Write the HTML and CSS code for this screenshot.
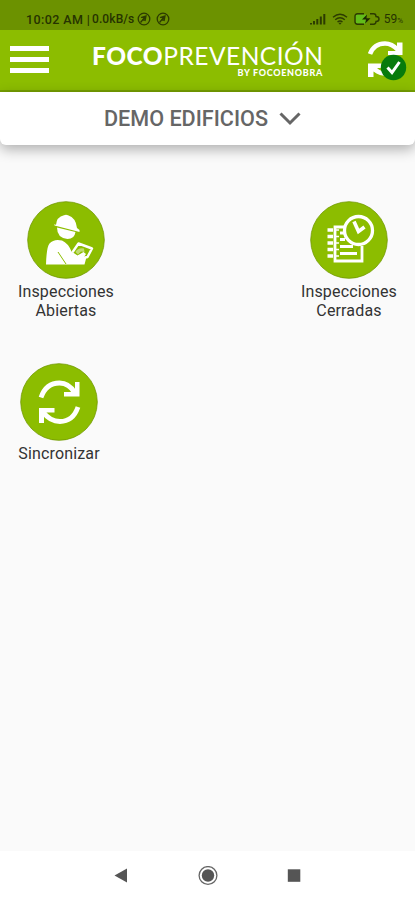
FILE: index.html
```html
<!DOCTYPE html>
<html lang="es">
<head>
  <meta charset="UTF-8">
  <meta name="viewport" content="width=device-width, initial-scale=1.0">
  <title>FocoPrevención</title>
  <link rel="stylesheet" href="styles.css">
</head>
<body>
  <!-- Status bar -->
  <div class="status-bar">
    <span class="status-time">10:02 AM | </span>
    <span class="status-speed">0.0kB/s</span>
    <svg class="status-dot" viewBox="0 0 14 14" width="14" height="14">
      <circle cx="7" cy="7" r="5.8" />
      <path d="M4 5.5l5-1.5-1 5M3.5 10.5l5-6M5 8h3" />
    </svg>
    <svg class="status-dot" viewBox="0 0 14 14" width="14" height="14">
      <circle cx="7" cy="7" r="5.8" />
      <path d="M4 5.5l5-1.5-1 5M3.5 10.5l5-6M5 8h3" />
    </svg>
    <div class="status-right">
      <svg viewBox="0 0 16 12" width="16" height="12">
        <path d="M1 11.5v-1.5M4 11.5V8M7.3 11.5V6M10.8 11.5V3.5M14.3 11.5V1" stroke="#2c3b00" stroke-width="2" />
      </svg>
      <svg class="wifi" viewBox="0 0 16 12" width="16" height="12">
        <path d="M1 4.2Q8-1.8 15 4.2M3.2 6.7Q8 2.7 12.8 6.7M5.5 9Q8 7 10.5 9" fill="none" stroke="#2c3b00" stroke-width="1.4" />
        <path d="M6.3 9.7h3.4L8 11.8z" fill="#2c3b00" />
      </svg>
      <svg class="battery" viewBox="0 0 26 12" width="26" height="12">
        <rect x="1.5" y="1.5" width="11" height="9" fill="#62bd19" />
        <path d="M10 .8H3.5Q1 .8 1 3.2v5.6q0 2.4 2.5 2.4H10M16 .8h3.5Q22 .8 22 3.5q3 0 3 2.5t-3 2.5q0 2.7-2.5 2.7H16" fill="none" stroke="#2c3b00" stroke-width="1.4" />
        <path d="M13 1.5L8 6.6h4L11 10.8l5.5-5.6h-4z" fill="#1d2800" />
      </svg>
      <span class="status-percent">59<small>%</small></span>
    </div>
  </div>

  <!-- Header -->
  <header class="header">
    <div class="menu">
      <span></span>
      <span></span>
      <span></span>
    </div>
    <div class="brand">
      <div class="brand-name"><b>FOCO</b>PREVENCIÓN</div>
      <div class="brand-by">BY FOCOENOBRA</div>
    </div>
    <svg class="sync-state" viewBox="0 0 42 44" width="42" height="44">
      <path d="M4 16Q8 5.500 19 5.500Q26 5.500 32 12" fill="none" stroke="#fff" stroke-width="4.6" />
      <path d="M36.500 4.500V17H22v-4h9V4.500z" fill="#fff" />
      <path d="M2 39V25.500h14v4.500H11Q15 34 22 34v4Q13 38 7.500 33.500V39z" fill="#fff" />
      <circle cx="27.500" cy="29.500" r="12.700" fill="#087b0c" />
      <path d="M21.500 29.500l4.500 5 7.500-10.500" fill="none" stroke="#fff" stroke-width="3" />
    </svg>
  </header>

  <!-- Building selector -->
  <div class="selector">
    <span class="selector-name">DEMO EDIFICIOS</span>
    <svg viewBox="0 0 22 14" width="22" height="14">
      <path d="M1.500 1.500l9.500 9.500L20.500 1.500" fill="none" stroke="#666" stroke-width="3" />
    </svg>
  </div>

  <!-- Options -->
  <main class="options">
    <div class="row">
      <div class="option">
        <svg viewBox="0 0 78 78" width="78" height="78">
          <circle class="disc" cx="39" cy="39" r="38.300" />
          <path d="M29 24Q29.500 16 37 14.300q2-1.300 4 0Q49 17 50 27l2.500 2v2L27.500 24.500v-1.500z" fill="#fff" />
          <path d="M30 26.500L48.500 31Q47.500 38 40.500 38Q30 37 30 26.500z" fill="#fff" />
          <path d="M19 63.500Q19.500 46 22.500 42.500Q27 37.500 35 39.500Q41 42 44.500 50.500l6 4 6-3.500 2.500 2-2 3h2.500L57.500 63.500z" fill="#fff" />
          <path d="M31 51l8 12" stroke="#8cbd00" stroke-width="1" />
          <path d="M58 56.500l2.500-.5 4.500-8.500L51.500 42.500l-5.500 8" fill="none" stroke="#fff" stroke-width="2.400" stroke-linejoin="round" stroke-linecap="round" />
          <path d="M48.500 51Q51 46.500 57 47.500l.5 3.500-3.500-.5-3 3z" fill="#fff" opacity=".45" />
        </svg>
        <div class="option-label">Inspecciones<br>Abiertas</div>
      </div>
      <div class="option">
        <svg viewBox="0 0 78 78" width="78" height="78">
          <circle class="disc" cx="39" cy="39" r="38.300" />
          <g fill="none" stroke="#fff">
            <path d="M34 26h-9v34h27V45" stroke-width="2.800" />
            <path d="M17.500 29H23M17.500 35.500H23M17.500 42H23M17.500 48.500H23M17.500 55H23" stroke-width="3.400" />
            <path d="M25 29h4M25 35.500h4M25 42h4M25 48.500h4M25 55h4" stroke-width="1.400" />
            <path d="M30 32h4M30 38.500h5M30 45.500h13M30 52.500h17" stroke-width="3.200" />
            <circle cx="48.500" cy="29.500" r="14" fill="#8cbd00" stroke-width="3.300" />
            <path d="M44 20.500l4.500 10 6-4.500" stroke-width="3.600" />
          </g>
        </svg>
        <div class="option-label">Inspecciones<br>Cerradas</div>
      </div>
    </div>
    <div class="row">
      <div class="option option-sync">
        <svg viewBox="0 0 78 78" width="78" height="78">
          <circle class="disc" cx="39" cy="39" r="38.300" />
          <g fill="none" stroke="#fff" stroke-width="4.800">
            <path d="M21 34.500Q26 20 39.500 20Q49 20 55 30" />
            <path d="M58 44Q53 58.500 40 58.500Q30 58.500 23 49" />
          </g>
          <path d="M59.500 19v14.500H44v-4.500H55V19zM19 60V45H34.500v4.500H24V60z" fill="#fff" />
        </svg>
        <div class="option-label">Sincronizar</div>
      </div>
    </div>
  </main>

  <!-- Android navigation -->
  <nav class="nav-bar">
    <svg viewBox="0 0 20 20" width="20" height="20">
      <path d="M2.500 9.500L15 2.500v14z" fill="#555" />
    </svg>
    <svg viewBox="0 0 20 20" width="20" height="20">
      <circle cx="10" cy="9.500" r="8.900" fill="#fff" stroke="#666" stroke-width="1.300" />
      <circle cx="10" cy="9.500" r="6.200" fill="#555" />
    </svg>
    <svg viewBox="0 0 20 20" width="20" height="20">
      <rect x="3.800" y="3.300" width="12.500" height="12.500" fill="#555" />
    </svg>
  </nav>
</body>
</html>
```
FILE: styles.css
```css
body {
  font-family: Roboto, sans-serif;
  margin: 0;
  height: 100vh;
  display: flex;
  flex-direction: column;
  background-color: #fafafa;
  overflow: hidden;
}

svg {
  display: block;
  flex-shrink: 0;
}

.status-bar {
  height: 30px;
  box-sizing: border-box;
  padding: 8px 12px 0 26px;
  display: flex;
  align-items: center;
  background-color: #6c9200;
  color: #263300;
  font-size: 12px;
  font-weight: 500;
  white-space: pre;
}

.status-time {
  width: 66px;
  font-size: 12.5px;
  letter-spacing: 0.4px;
}

.status-speed {
  width: 45px;
  letter-spacing: 0.1px;
}

.status-dot {
  margin-right: 5px;
  fill: none;
  stroke: #2c3b00;
  stroke-width: 1.3;
}

.status-right {
  margin-left: auto;
  display: flex;
  align-items: center;
}

.wifi {
  margin-left: 6px;
}

.battery {
  margin: 0 4px 0 6px;
}

.status-percent {
  font-weight: 400;
}

.status-percent small {
  font-size: 8px;
}

.header {
  height: 62px;
  box-sizing: border-box;
  padding: 0 7px 0 10px;
  display: flex;
  align-items: flex-start;
  background-color: #8cbd00;
  border-bottom: 2px solid #76a000;
  color: #fff;
}

.menu {
  width: 39px;
  margin-top: 16px;
  display: flex;
  flex-direction: column;
  gap: 6px;
}

.menu span {
  height: 5px;
  background-color: #fff;
}

.brand {
  width: 232px;
  margin: 14px 0 0 43px;
  font-family: Lato, sans-serif;
  white-space: nowrap;
}

.brand-name {
  font-size: 24.5px;
  line-height: 24px;
  letter-spacing: 0.5px;
}

.brand-name b {
  font-weight: 900;
}

.brand-by {
  padding-right: 1px;
  text-align: right;
  font-size: 9px;
  line-height: 10px;
  font-weight: 900;
  letter-spacing: 0.7px;
}

.sync-state {
  margin: 8px 0 0 auto;
}

.selector {
  height: 53px;
  padding-right: 10px;
  box-sizing: border-box;
  display: flex;
  align-items: center;
  justify-content: center;
  gap: 11px;
  background-color: #fff;
  border-radius: 0 0 6px 6px;
  box-shadow: 0 4px 14px rgba(0, 0, 0, 0.32);
  color: #666;
}

.selector-name {
  font-size: 21.6px;
  font-weight: 500;
}

.options {
  flex: 1;
  padding: 56px 18px 0;
}

.row {
  height: 162px;
  display: flex;
  justify-content: space-between;
}

.option {
  width: 96px;
  display: flex;
  flex-direction: column;
  align-items: center;
}

.option-sync {
  width: 82px;
}

.disc {
  fill: #8cbd00;
  stroke: #719900;
  stroke-width: 0.8;
}

.option-label {
  margin-top: 4px;
  color: #333;
  font-size: 16px;
  line-height: 18.5px;
  letter-spacing: 0.15px;
  text-align: center;
  white-space: nowrap;
}

.nav-bar {
  height: 49px;
  display: flex;
  justify-content: center;
  align-items: center;
  gap: 66px;
  background-color: #fff;
}
```
